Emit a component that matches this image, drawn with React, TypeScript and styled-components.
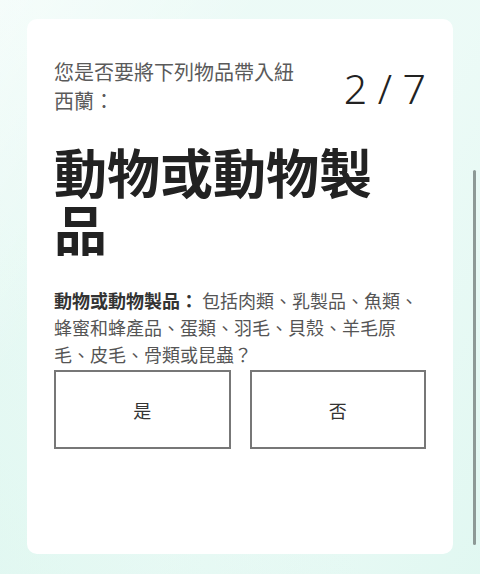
import React from "react";
import styled, { createGlobalStyle } from "styled-components";

const Global = createGlobalStyle`
  html, body {
    margin: 0;
    padding: 0;
  }
  body {
    font-family: "Noto Sans CJK TC", "Noto Sans", sans-serif;
    background: #eafaf6;
  }
`;

const Page = styled.div`
  position: relative;
  box-sizing: border-box;
  min-height: 574px;
  padding: 19px 27px 20px 27px;
  background:
    linear-gradient(125deg, rgba(255, 255, 255, 0.5) 0%, rgba(255, 255, 255, 0) 30%),
    linear-gradient(60deg, rgba(215, 245, 236, 0.5) 0%, rgba(255, 255, 255, 0) 45%),
    linear-gradient(300deg, rgba(218, 246, 238, 0.6) 0%, rgba(240, 252, 249, 0.2) 40%),
    #ebfaf6;
`;

const Card = styled.div`
  box-sizing: border-box;
  height: 535px;
  background: #ffffff;
  border-radius: 10px;
  padding: 38px 27px 27px 27px;
  display: flex;
  flex-direction: column;
`;

const Header = styled.div`
  display: flex;
  flex-direction: row;
  justify-content: space-between;
  align-items: center;
`;

const Subtitle = styled.div`
  width: 246px;
  font-size: 20px;
  line-height: 29px;
  color: #5a5a5a;
`;

const Counter = styled.div`
  font-family: "Noto Sans", "Open Sans", sans-serif;
  font-weight: 300;
  font-size: 41px;
  line-height: 1;
  color: #222222;
  margin-top: 4px;
`;

const Title = styled.h1`
  margin: 28px 0 0 0;
  max-width: 330px;
  font-size: 53px;
  line-height: 57px;
  font-weight: 700;
  color: #222222;
`;

const Description = styled.p`
  margin: 30px 0 0 0;
  font-size: 18px;
  line-height: 27px;
  color: #555555;
`;

const Term = styled.strong`
  font-weight: 700;
  color: #333333;
`;

const Choices = styled.div`
  margin-top: 2px;
  display: flex;
  flex-direction: row;
  gap: 19px;
`;

const Choice = styled.button`
  flex: 1;
  height: 79px;
  box-sizing: border-box;
  background: #ffffff;
  border: 2px solid #777777;
  border-radius: 0;
  font-family: "Noto Sans CJK TC", "Noto Sans", sans-serif;
  font-size: 18px;
  color: #333333;
  cursor: pointer;
`;

const Scrollbar = styled.div`
  position: absolute;
  right: 4px;
  top: 170px;
  width: 3px;
  height: 375px;
  border-radius: 2px;
  background: #8d9996;
`;

export default function App() {
  return (
    <>
      <Global />
      <Page>
        <Card>
          <Header>
            <Subtitle>您是否要將下列物品帶入紐西蘭：</Subtitle>
            <Counter>2 / 7</Counter>
          </Header>
          <Title>動物或動物製品</Title>
          <Description>
            <Term>動物或動物製品：</Term> 包括肉類、乳製品、魚類、蜂蜜和蜂產品、蛋類、羽毛、貝殼、羊毛原毛、皮毛、骨類或昆蟲？
          </Description>
          <Choices>
            <Choice>是</Choice>
            <Choice>否</Choice>
          </Choices>
        </Card>
        <Scrollbar />
      </Page>
    </>
  );
}
